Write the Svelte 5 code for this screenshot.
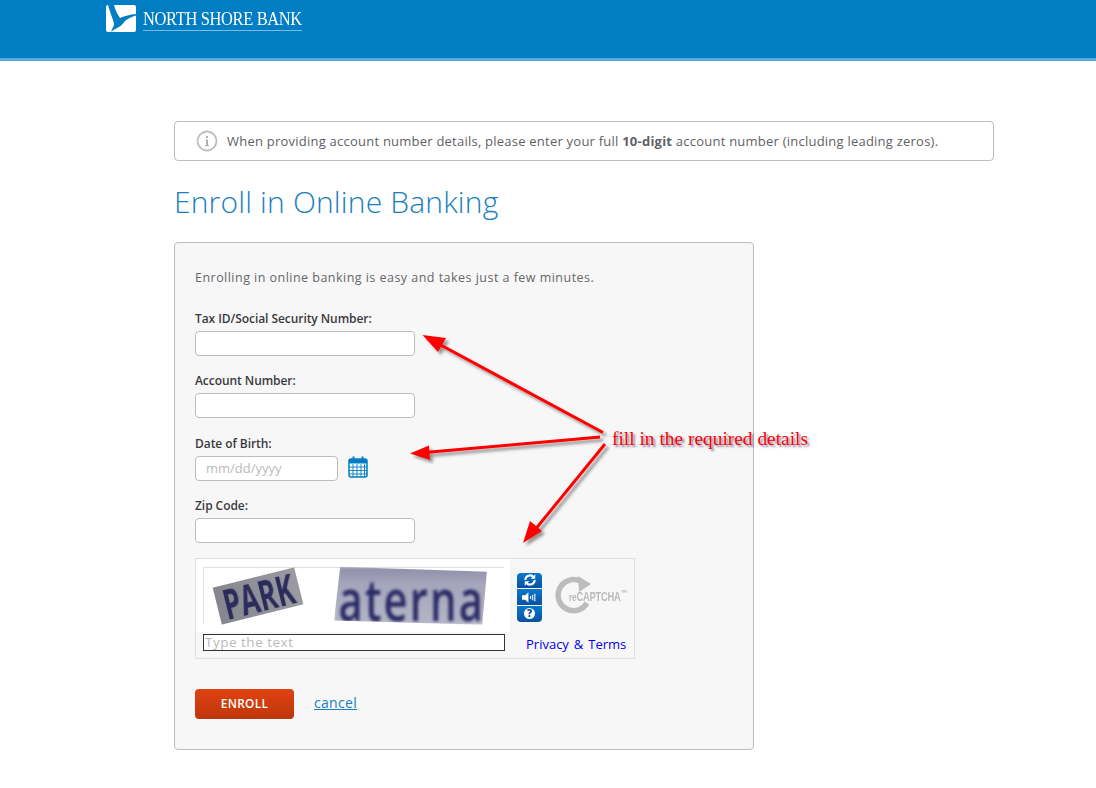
<script>
  const fields = [
    { label: 'Tax ID/Social Security Number:' },
    { label: 'Account Number:' }
  ];
</script>

<div class="page">
  <header class="top">
    <div class="brand">
      <svg class="mark" width="30" height="27" viewBox="0 0 30 27">
        <rect x="0" y="0" width="30" height="27" rx="2" fill="#fff"/>
        <path d="M2 0 L8 0 C9 4 11 9 14 13 C19 11 24 9.5 30 9 L30 10.5 C26 11.5 22 13.5 19 16 C17 19 15 21 12 22.5 L5 26.5 L8 20 C8 18 7.5 16.5 7 15 C5 10 3.5 5 2 0 Z" fill="#007dc3"/>
      </svg>
      <div class="wordmark"><span>NORTH SHORE BANK</span></div>
    </div>
  </header>

  <main class="content">
    <div class="notice">
      <svg class="info" width="22" height="22" viewBox="0 0 22 22">
        <circle cx="11" cy="11" r="9.5" fill="none" stroke="#bdbdbd" stroke-width="1.8"/>
        <rect x="10" y="9.5" width="2" height="6.5" fill="#b0b0b0"/>
        <rect x="10" y="6" width="2" height="2" fill="#b0b0b0"/>
        <rect x="9" y="15.2" width="4" height="1" fill="#b0b0b0"/>
      </svg>
      <p>When providing account number details, please enter your full <b>10-digit</b> account number (including leading zeros).</p>
    </div>

    <h1>Enroll in Online Banking</h1>

    <form class="card">
      <p class="lead">Enrolling in online banking is easy and takes just a few minutes.</p>

      {#each fields as f}
        <div class="field">
          <label>{f.label}<input type="text" /></label>
        </div>
      {/each}

      <div class="field">
        <label>Date of Birth:
          <span class="date-row">
            <input class="date" type="text" placeholder="mm/dd/yyyy" />
            <svg class="cal" width="20" height="22" viewBox="0 0 20 22">
              <rect x="1" y="3" width="18" height="18" rx="2" fill="#fff" stroke="#007dc3" stroke-width="1.5"/>
              <rect x="1" y="3" width="18" height="4.5" fill="#007dc3"/>
              <rect x="4.5" y="0.5" width="2" height="4.5" fill="#007dc3"/>
              <rect x="13.5" y="0.5" width="2" height="4.5" fill="#007dc3"/>
              <path d="M1 11H19M1 14.5H19M1 18H19M5 8V21M9 8V21M13 8V21M16.5 8V21" stroke="#007dc3" stroke-width="0.9" fill="none"/>
            </svg>
          </span>
        </label>
      </div>

      <div class="field last">
        <label>Zip Code:<input type="text" /></label>
      </div>

      <div class="captcha">
        <div class="cap-left">
          <div class="cap-img">
            <span class="park"><span>PARK</span></span>
            <span class="aterna"><span>aterna</span></span>
          </div>
          <div class="cap-input">Type the text</div>
        </div>
        <div class="cap-right">
          <div class="cap-top">
            <div class="cap-btns">
              <span class="cb">
                <svg width="14" height="14" viewBox="0 0 12 12"><path d="M2 6a4 4 0 0 1 7-2.6M10 6a4 4 0 0 1-7 2.6" fill="none" stroke="#fff" stroke-width="1.8"/><path d="M10.5 1v4h-4zM1.5 11V7h4z" fill="#fff"/></svg>
              </span>
              <span class="cb">
                <svg width="15" height="11" viewBox="0 0 14 10"><path d="M0 3h3l3-3v10L3 7H0z" fill="#fff"/><path d="M8 3.5v3M10 2.5v5M12 1.5v7" stroke="#fff" stroke-width="1"/></svg>
              </span>
              <span class="cb">
                <span class="q">?</span>
              </span>
            </div>
            <div class="rc">
              <svg width="38" height="38" viewBox="0 0 38 38">
                <path d="M31 26A15.5 15.5 0 1 1 24 4" fill="none" stroke="#bcbcbc" stroke-width="5.5"/>
                <path d="M22 -1L35 7 23 15z" fill="#bcbcbc"/>
              </svg>
              <span class="rc-text"><i>re</i>CAPTCHA<sup>™</sup></span>
            </div>
          </div>
          <a class="terms" href="#terms">Privacy &amp; Terms</a>
        </div>
      </div>

      <div class="actions">
        <button type="button" class="enroll"><span>ENROLL</span></button>
        <a class="cancel" href="#cancel">cancel</a>
      </div>
    </form>
  </main>

  <svg class="arrows" width="1096" height="788" viewBox="0 0 1096 788">
    <defs>
      <filter id="sh" x="-20%" y="-20%" width="140%" height="140%">
        <feDropShadow dx="3" dy="3" stdDeviation="1.5" flood-color="#000" flood-opacity="0.4"/>
      </filter>
    </defs>
    <g filter="url(#sh)" fill="#f00" stroke="none">
      <path d="M603 432.5 L437 343" stroke="#f00" stroke-width="3"/>
      <path d="M422.5 335 L446 338 L438 352 Z"/>
      <path d="M600 437 L425 452.5" stroke="#f00" stroke-width="3"/>
      <path d="M410 453.5 L429 445.5 L430 460 Z"/>
      <path d="M605 444 L534 531" stroke="#f00" stroke-width="3"/>
      <path d="M523 543 L530 521 L542 531 Z"/>
    </g>
  </svg>
  <div class="callout">fill in the required details</div>
</div>

<style>
  :global(body) {
    margin: 0;
    background: #fff;
    font-family: "Open Sans", sans-serif;
    color: #555;
  }
  .page {
    position: relative;
    height: 788px;
    overflow: hidden;
  }
  .top {
    height: 58px;
    background: #007dc3;
    border-bottom: 3px solid #5aa9d8;
    padding-left: 106px;
  }
  .brand {
    display: flex;
    align-items: flex-start;
    gap: 7px;
    padding-top: 5px;
  }
  .mark { display: block; }
  .wordmark {
    margin-top: 4px;
    width: 159px;
    height: 21px;
    font-family: "Liberation Serif", serif;
    font-size: 18.5px;
    line-height: 21px;
    color: #fff;
    white-space: nowrap;
    border-bottom: 1px solid #7fbde0;
  }
  .wordmark span {
    display: inline-block;
    letter-spacing: -0.4px;
    transform: scaleX(0.89);
    transform-origin: left center;
  }
  .content {
    width: 820px;
    margin-left: 174px;
    padding-top: 60px;
  }
  .notice {
    display: flex;
    align-items: center;
    gap: 9px;
    height: 38px;
    padding-left: 21px;
    border: 1px solid #bdbdbd;
    border-radius: 4px;
  }
  .notice p {
    margin: 0;
    font-size: 13px;
    letter-spacing: 0.23px;
    color: #5f5f66;
    white-space: nowrap;
  }
  .notice b { font-weight: 700; }
  h1 {
    margin: 19px 0 0;
    font-weight: 300;
    font-size: 30px;
    letter-spacing: 0.17px;
    line-height: 44px;
    color: #1a7fbd;
  }
  .card {
    box-sizing: border-box;
    width: 580px;
    height: 508px;
    margin-top: 18px;
    padding: 26px 20px 0;
    background: #f7f7f7;
    border: 1px solid #bdbdbd;
    border-radius: 4px;
  }
  .lead {
    margin: 0 0 24px;
    font-size: 12.5px;
    line-height: 17px;
    letter-spacing: 0.47px;
    color: #66666c;
  }
  .field {
    height: 62.33px;
  }
  .field.last { height: 60.67px; }
  label {
    display: block;
    font-size: 12px;
    font-weight: 600;
    line-height: 17px;
    letter-spacing: -0.06px;
    color: #3a3a40;
  }
  input {
    display: block;
    box-sizing: border-box;
    width: 220px;
    height: 25px;
    margin-top: 4px;
    padding: 0 10px;
    background: #fff;
    border: 1px solid #bdbdbd;
    border-radius: 4px;
    font-family: "Open Sans", sans-serif;
    font-size: 13px;
  }
  input::placeholder { color: #bbb; opacity: 1; font-weight: 400; }
  .date-row {
    display: flex;
    align-items: center;
    gap: 10px;
  }
  .date { width: 143px; }
  .cal { margin-top: 2px; }
  .captcha {
    box-sizing: border-box;
    display: flex;
    width: 440px;
    height: 101px;
    border: 1px solid #e0e0e0;
  }
  .cap-left {
    width: 314px;
  }
  .cap-img {
    position: relative;
    box-sizing: border-box;
    width: 314px;
    height: 73px;
    background: #fff;
  }
  .cap-img::before {
    content: "";
    position: absolute;
    left: 7px;
    top: 8px;
    width: 300px;
    height: 56px;
    border-top: 1px solid #e0e0e0;
    border-left: 1px solid #e0e0e0;
  }
  .park {
    position: absolute;
    left: 20px;
    top: 18px;
    width: 84px;
    height: 38px;
    background: linear-gradient(90deg, #86868e, #9a9aa2);
    color: #2c2c5c;
    font-family: "Open Sans", sans-serif;
    font-size: 42px;
    font-weight: 700;
    line-height: 38px;
    text-align: center;
    white-space: nowrap;
    transform: rotate(-14deg);
    filter: blur(0.5px);
  }
  .park span {
    display: inline-block;
    transform: scaleX(0.65);
    transform-origin: center;
    margin: 0 -20px;
  }
  .aterna {
    position: absolute;
    left: 138px;
    top: 8px;
    width: 156px;
    height: 58px;
    background: linear-gradient(#8d8ea8 0%, #a5a6bb 30%, #b4b5c6 100%);
    color: #2a2a66;
    font-family: "Open Sans", sans-serif;
    font-size: 58px;
    font-weight: 600;
    line-height: 58px;
    text-align: center;
    white-space: nowrap;
    clip-path: polygon(4% 0, 98% 9%, 95% 100%, 0 93%);
    filter: blur(1.4px);
  }
  .aterna span {
    display: inline-block;
    letter-spacing: 3px;
    transform: translateY(3px) scaleX(0.72);
    margin: 0 -30px;
  }
  .cap-input {
    box-sizing: border-box;
    width: 302px;
    height: 17px;
    margin: 2px 0 0 7px;
    border: 1px solid #333;
    background: #fff;
    font-size: 13.5px;
    line-height: 14px;
    letter-spacing: 0.5px;
    color: #b9b9bd;
    padding-left: 1px;
    white-space: nowrap;
  }
  .cap-right {
    display: flex;
    flex-direction: column;
    flex: 1;
    padding-left: 7px;
  }
  .cap-top {
    display: flex;
    gap: 14px;
    padding-top: 14px;
    height: 62px;
  }
  .cap-btns {
    display: flex;
    flex-direction: column;
    gap: 1px;
    width: 25px;
    height: 49px;
    border-radius: 4px;
    overflow: hidden;
  }
  .cb {
    display: flex;
    align-items: center;
    justify-content: center;
    flex: 1;
    background: linear-gradient(#0a78cc, #0a50a0);
  }
  .q {
    display: block;
    width: 11px;
    height: 11px;
    border-radius: 50%;
    background: #fff;
    color: #0a50a0;
    font-size: 10px;
    font-weight: 800;
    line-height: 11px;
    text-align: center;
  }
  .rc {
    position: relative;
    width: 73px;
    height: 38px;
    margin-top: 4px;
  }
  .rc svg { display: block; overflow: visible; }
  .rc-text {
    position: absolute;
    left: 13px;
    top: 13px;
    font-family: "Liberation Sans", sans-serif;
    font-size: 12.5px;
    font-weight: 700;
    line-height: 15px;
    letter-spacing: -0.2px;
    color: #b9b9b9;
    white-space: nowrap;
    transform: scaleX(0.74);
    transform-origin: left center;
  }
  .rc-text i { font-style: normal; font-size: 11px; }
  .rc-text sup { font-size: 9px; line-height: 0; }
  .terms {
    margin-left: 9px;
    font-size: 13px;
    line-height: 18px;
    word-spacing: 1.6px;
    color: #0000ee;
    text-decoration: none;
    white-space: nowrap;
  }
  .actions {
    display: flex;
    align-items: center;
    gap: 20px;
    margin-top: 30px;
  }
  .enroll {
    width: 99px;
    height: 30px;
    padding: 0 0 2px;
    border: 0;
    border-radius: 4px;
    background: linear-gradient(#e04211, #bd370c);
    color: #fff;
    font-family: "Open Sans", sans-serif;
    font-size: 11.8px;
    font-weight: 600;
    letter-spacing: 0.3px;
  }
  .cancel {
    margin-top: -2px;
    font-size: 14px;
    line-height: 18px;
    letter-spacing: 0.3px;
    color: #1a7fbd;
    text-decoration: underline;
  }
  .arrows {
    position: absolute;
    left: 0;
    top: 0;
    pointer-events: none;
  }
  .callout {
    position: absolute;
    left: 612px;
    top: 428px;
    font-family: "Liberation Serif", serif;
    font-size: 19.4px;
    line-height: 22px;
    color: #f00;
    text-shadow: 2px 2px 2px rgba(60, 60, 110, 0.6);
    white-space: nowrap;
  }
</style>
